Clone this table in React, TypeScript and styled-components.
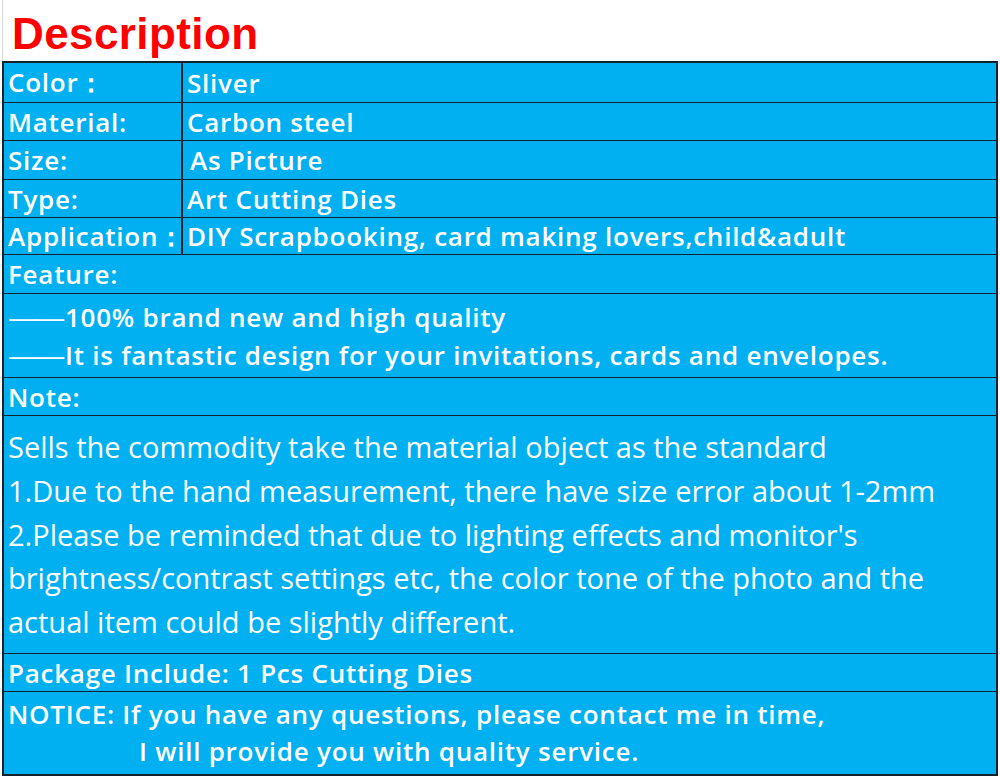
import styled, { createGlobalStyle } from "styled-components";

const GlobalStyle = createGlobalStyle`
  html, body {
    margin: 0;
    padding: 0;
    background: #ffffff;
  }
  body {
    font-family: "Open Sans", "Noto Sans", "Liberation Sans", sans-serif;
  }
`;

const BLUE = "#00b0f0";
const LINE = "#14232b";

const Page = styled.div`
  width: 1000px;
  height: 777px;
  padding: 0 2px 0 2px;
  box-sizing: border-box;
  overflow: hidden;
`;

const Header = styled.div`
  height: 61px;
  box-sizing: border-box;
  border-left: 1px solid #d8d8d8;
  padding-left: 9px;
  display: flex;
  align-items: flex-end;
`;

const Title = styled.h1`
  margin: 0 0 5px 0;
  font-family: "Liberation Sans", Arial, sans-serif;
  font-weight: 700;
  font-size: 44px;
  line-height: 1;
  color: #ff0000;
  letter-spacing: 0.4px;
`;

const Table = styled.div`
  display: grid;
  grid-template-columns: 179px 1fr;
  background: ${BLUE};
  border: 2px solid ${LINE};
  color: #ffffff;
`;

const Cell = styled.div<{ $full?: boolean; $h?: number; $divider?: boolean }>`
  grid-column: ${({ $full }) => ($full ? "1 / -1" : "auto")};
  height: ${({ $h }) => $h ?? 38}px;
  box-sizing: border-box;
  border-top: 1px solid ${LINE};
  border-right: ${({ $divider }) => ($divider ? `2px solid ${LINE}` : "none")};
  padding: 0 4px;
  display: flex;
  align-items: center;
  font-size: 26px;
  font-weight: 600;
  letter-spacing: 0.75px;
  white-space: nowrap;

  &:nth-child(-n + 2) {
    border-top: none;
  }
`;

const ValueText = styled.span<{ $indent?: number }>`
  padding-left: ${({ $indent }) => $indent ?? 0}px;
`;

const Lines = styled.div`
  display: flex;
  flex-direction: column;
  justify-content: center;
  width: 100%;
`;

const FeatureLine = styled.div`
  display: flex;
  align-items: baseline;
  line-height: 38px;
`;

// the source uses a pair of em dashes that run together into one long rule
const Dash = styled.span`
  display: inline-block;
  width: 57px;
  font-weight: 400;
  letter-spacing: -3px;
  transform: scaleX(1.17);
  transform-origin: left center;
`;

const NoteBody = styled.div`
  font-size: 29px;
  font-weight: 400;
  letter-spacing: 0;
  line-height: 43.7px;
  white-space: normal;
`;

const Notice = styled.div`
  line-height: 37px;
`;

const NoticeIndent = styled.div`
  padding-left: 131px;
`;

const specs: { label: string; value: string; indent?: number; h: number }[] = [
  { label: "Color：", value: "Sliver", h: 39 },
  { label: "Material:", value: "Carbon steel", h: 38 },
  { label: "Size:", value: "As Picture", indent: 3, h: 39 },
  { label: "Type:", value: "Art Cutting Dies", h: 38 },
  { label: "Application：", value: "DIY Scrapbooking, card making lovers,child&adult", h: 37 },
];

export default function App() {
  return (
    <Page>
      <GlobalStyle />
      <Header>
        <Title>Description</Title>
      </Header>
      <Table>
        {specs.map((s) => [
          <Cell key={s.label} $divider $h={s.h}>
            {s.label}
          </Cell>,
          <Cell key={s.label + "-v"} $h={s.h}>
            <ValueText $indent={s.indent}>{s.value}</ValueText>
          </Cell>,
        ])}
        <Cell $full $h={39}>Feature:</Cell>
        <Cell $full $h={84}>
          <Lines>
            <FeatureLine>
              <Dash>——</Dash>
              <span>100% brand new and high quality</span>
            </FeatureLine>
            <FeatureLine>
              <Dash>——</Dash>
              <span>It is fantastic design for your invitations, cards and envelopes.</span>
            </FeatureLine>
          </Lines>
        </Cell>
        <Cell $full $h={38}>Note:</Cell>
        <Cell $full $h={238}>
          <NoteBody>
            Sells the commodity take the material object as the standard
            <br />
            1.Due to the hand measurement, there have size error about 1-2mm
            <br />
            2.Please be reminded that due to lighting effects and monitor's
            <br />
            brightness/contrast settings etc, the color tone of the photo and the
            <br />
            actual item could be slightly different.
          </NoteBody>
        </Cell>
        <Cell $full $h={38}>Package Include: 1 Pcs Cutting Dies</Cell>
        <Cell $full $h={83}>
          <Notice>
            NOTICE: If you have any questions, please contact me in time,
            <NoticeIndent>I will provide you with quality service.</NoticeIndent>
          </Notice>
        </Cell>
      </Table>
    </Page>
  );
}
